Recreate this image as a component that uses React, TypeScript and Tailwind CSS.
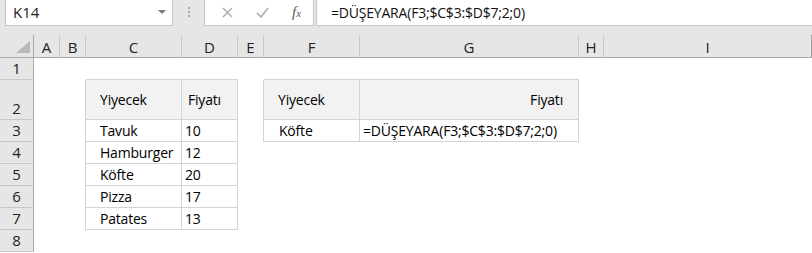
const COLS = ["A", "B", "C", "D", "E", "F", "G", "H", "I"];
const ROWS = [1, 2, 3, 4, 5, 6, 7, 8];
const FORMULA = "=DÜŞEYARA(F3;$C$3:$D$7;2;0)";

type CellData = { text: string; cls: string };

const cells: Record<string, CellData> = {
  C2: { text: "Yiyecek", cls: "pl-[14px]" },
  D2: { text: "Fiyatı", cls: "pl-[6px]" },
  F2: { text: "Yiyecek", cls: "pl-[14px]" },
  G2: { text: "Fiyatı", cls: "justify-end pr-[15px]" },
  C3: { text: "Tavuk", cls: "pl-[14px]" },
  D3: { text: "10", cls: "pl-[3px]" },
  F3: { text: "Köfte", cls: "pl-[15px]" },
  G3: { text: FORMULA, cls: "pl-[3px]" },
  C4: { text: "Hamburger", cls: "pl-[14px]" },
  D4: { text: "12", cls: "pl-[3px]" },
  C5: { text: "Köfte", cls: "pl-[14px]" },
  D5: { text: "20", cls: "pl-[3px]" },
  C6: { text: "Pizza", cls: "pl-[14px]" },
  D6: { text: "17", cls: "pl-[3px]" },
  C7: { text: "Patates", cls: "pl-[14px]" },
  D7: { text: "13", cls: "pl-[3px]" },
};

function inTable(r: number, c: number) {
  if ((c === 2 || c === 3) && r >= 2 && r <= 7) return true;
  if ((c === 5 || c === 6) && r >= 2 && r <= 3) return true;
  return false;
}

function NameBox() {
  return (
    <div className="ml-[5px] w-[168px] h-[26px] bg-white border-x border-b border-[#c6c6c6] flex items-center justify-between pl-[7px] pr-[6px]">
      <span className="text-[15px] text-[#222]">K14</span>
      <svg width="8" height="5" viewBox="0 0 8 5">
        <path d="M0 0 L8 0 L4 4 Z" fill="#7a7a7a" />
      </svg>
    </div>
  );
}

function FormulaButtons() {
  return (
    <div className="w-[110px] h-[26px] bg-white border-x border-b border-[#c6c6c6] flex items-center">
      <div className="w-[40px] flex justify-center pl-[4px]">
        <svg width="11" height="11" viewBox="0 0 11 11">
          <path d="M1 1 L10 10 M10 1 L1 10" stroke="#ababab" strokeWidth="1.4" />
        </svg>
      </div>
      <div className="w-[35px] flex justify-center">
        <svg width="13" height="11" viewBox="0 0 13 11">
          <path d="M1 6 L5 10 L12 1" stroke="#ababab" strokeWidth="1.6" fill="none" />
        </svg>
      </div>
      <div className="w-[33px] flex justify-center">
        <span className="font-['Liberation_Serif',serif] italic text-[#5a5a5a] text-[15px] leading-none">
          f<span className="text-[11px]">x</span>
        </span>
      </div>
    </div>
  );
}

export default function App() {
  return (
    <div className="w-[812px] h-[253px] overflow-hidden bg-white font-['Open_Sans',sans-serif] select-none">
      <div className="bg-[#e6e6e6]">
        <div className="h-[26px] flex items-start">
          <NameBox />
          <div className="w-[31px] h-[26px] flex flex-col items-center justify-center gap-[2px] pb-[2px]">
            <div className="w-[2px] h-[2px] bg-[#a6a6a6]" />
            <div className="w-[2px] h-[2px] bg-[#a6a6a6]" />
            <div className="w-[2px] h-[2px] bg-[#a6a6a6]" />
          </div>
          <FormulaButtons />
          <div className="ml-[2px] flex-1 h-[26px] bg-white border-l border-b border-[#c6c6c6] flex items-center pl-[14px] text-[14px] text-[#111] tracking-[-0.2px]">
            {FORMULA}
          </div>
        </div>
        <div className="h-[9px]" />
      </div>

      <div className="grid grid-cols-[34px_26px_26px_96px_56px_26px_96px_219px_25px_208px] grid-rows-[23px_22px_40px_22px_22px_22px_22px_22px_22px] text-[14px]">
        <div className="bg-[#e6e6e6] border-r border-b border-[#ababab] relative">
          <svg className="absolute left-[16px] top-[6px]" width="14" height="12" viewBox="0 0 14 12">
            <path d="M14 0 L14 12 L0 12 Z" fill="#b9b9b9" />
          </svg>
        </div>
        {COLS.map((col, i) => (
          <div
            key={col}
            className={
              i === COLS.length - 1
                ? "bg-[#e6e6e6] border-b border-b-[#ababab] border-r border-r-[#a0a0a0] flex items-center justify-center text-[#222] text-[15px] pt-[2px]"
                : "bg-[#e6e6e6] border-b border-b-[#ababab] border-r border-r-[#c8c8c8] flex items-center justify-center text-[#222] text-[15px] pt-[2px]"
            }
          >
            {col}
          </div>
        ))}

        {ROWS.map((r) => (
          <div key={r} className="contents">
            <div className="bg-[#e6e6e6] border-r border-r-[#ababab] border-b border-b-[#c8c8c8] flex items-end justify-center text-[#222] text-[15px] leading-[22px]">
              {r}
            </div>
            {COLS.map((col, c) => {
              const own = inTable(r, c);
              const right = own || inTable(r, c + 1);
              const bottom = own || inTable(r + 1, c);
              const data = cells[col + r];
              const bg = own && r === 2 ? "bg-[#f2f2f2]" : "bg-white";
              const rb = right ? "border-r border-r-[#d4d4d4]" : "";
              const bb = bottom ? "border-b border-b-[#d4d4d4]" : "";
              return (
                <div
                  key={col}
                  className={`${bg} ${rb} ${bb} flex items-center whitespace-nowrap overflow-visible text-black tracking-[-0.2px] ${data ? data.cls : ""}`}
                >
                  {data ? data.text : null}
                </div>
              );
            })}
          </div>
        ))}
      </div>
    </div>
  );
}
